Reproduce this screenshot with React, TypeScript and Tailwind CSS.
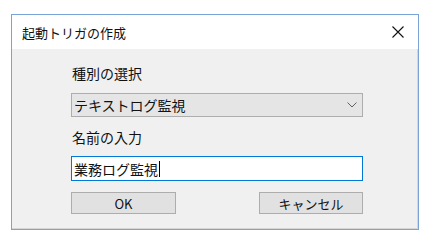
const Chevron = () => (
  <svg width="10" height="6" viewBox="0 0 10 6" fill="none">
    <path d="M0.5 0.5 L5 5 L9.5 0.5" stroke="#606060" strokeWidth="1" />
  </svg>
);

const CloseIcon = () => (
  <svg width="12" height="12" viewBox="0 0 12 12" fill="none">
    <path d="M0.5 0.5 L11.5 11.5 M11.5 0.5 L0.5 11.5" stroke="#111" strokeWidth="1.1" />
  </svg>
);

export default function App() {
  return (
    <div
      className="w-[430px] h-[244px] bg-white pt-[14px] pl-[11px] text-[#111]"
      style={{ fontFamily: '"Noto Sans CJK JP", "Noto Sans", sans-serif' }}
    >
      <div className="w-[408px] h-[216px] border border-[#7aa4d8] flex flex-col">
        {/* title bar */}
        <div className="h-[34px] bg-white flex items-center justify-between pl-[10px] pr-[14px]">
          <span className="text-[13px] leading-none">起動トリガの作成</span>
          <CloseIcon />
        </div>

        {/* body */}
        <div className="flex-1 bg-[#f0f0f0] border-r border-b border-[#d6d6d6] pl-[59px] pt-[15px]">
          <div className="w-[292px] flex flex-col">
            <label className="text-[14px] leading-[18px] pl-[1px]">種別の選択</label>
            <div className="mt-[11px] h-[24px] bg-[#e5e5e5] border border-[#adadad] flex items-center justify-between pl-[2px] pr-[5px]">
              <span className="text-[14px] leading-none">テキストログ監視</span>
              <Chevron />
            </div>

            <label className="mt-[11px] text-[14px] leading-[18px] pl-[1px]">名前の入力</label>
            <div className="mt-[10px] h-[25px] bg-white border border-[#0078d7] flex items-center pl-[2px]">
              <span className="text-[14px] leading-none">業務ログ監視</span>
              <span className="w-px h-[16px] bg-black ml-[1px]" />
            </div>

            <div className="mt-[11px] flex justify-between">
              <button className="w-[105px] h-[22px] bg-[#e1e1e1] border border-[#adadad] text-[13px] leading-none">
                OK
              </button>
              <button className="w-[104px] h-[22px] bg-[#e1e1e1] border border-[#adadad] text-[13px] leading-none">
                キャンセル
              </button>
            </div>
          </div>
        </div>
      </div>
    </div>
  );
}
